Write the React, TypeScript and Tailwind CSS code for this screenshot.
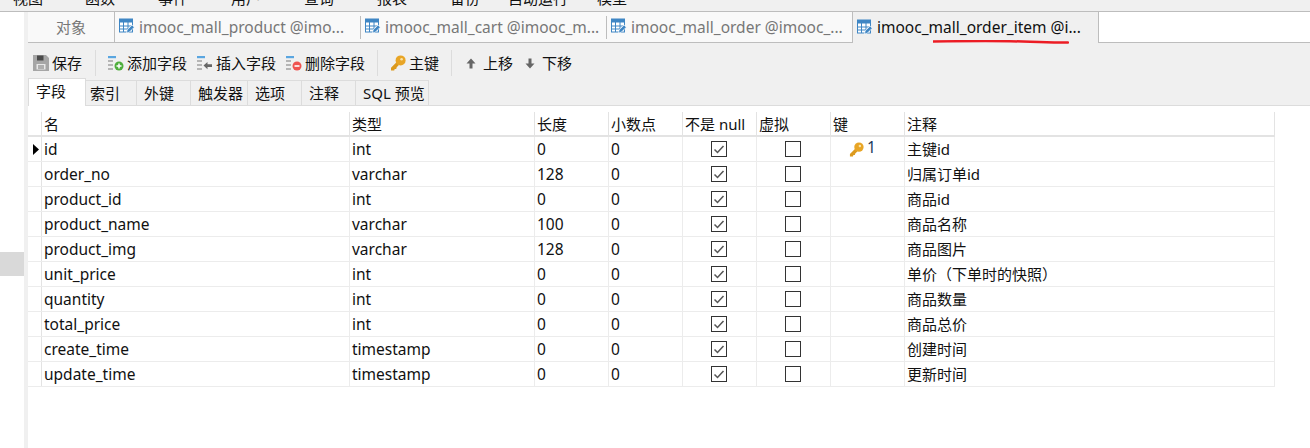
const font = { fontFamily: '"Noto Sans", "Noto Sans CJK SC", sans-serif' };

const menus = [
  { label: '视图', w: 'w-[72px]' },
  { label: '函数', w: 'w-[73px]' },
  { label: '事件', w: 'w-[73px]' },
  { label: '用户', w: 'w-[73px]' },
  { label: '查询', w: 'w-[73px]' },
  { label: '报表', w: 'w-[73px]' },
  { label: '备份', w: 'w-[58px]' },
  { label: '自动运行', w: 'w-[89px]' },
  { label: '模型', w: 'w-[40px]' },
];

const rows = [
  ['id', 'int', '0', '0', '主键id'],
  ['order_no', 'varchar', '128', '0', '归属订单id'],
  ['product_id', 'int', '0', '0', '商品id'],
  ['product_name', 'varchar', '100', '0', '商品名称'],
  ['product_img', 'varchar', '128', '0', '商品图片'],
  ['unit_price', 'int', '0', '0', '单价（下单时的快照）'],
  ['quantity', 'int', '0', '0', '商品数量'],
  ['total_price', 'int', '0', '0', '商品总价'],
  ['create_time', 'timestamp', '0', '0', '创建时间'],
  ['update_time', 'timestamp', '0', '0', '更新时间'],
];

const gridCols = 'grid grid-cols-[14px_308px_185px_74px_74px_74px_74px_74px_370px] w-[1247px]';

const TableIcon = () => (
  <svg width="16" height="16" viewBox="0 0 16 16" className="shrink-0 -mt-[2px]">
    <rect x="0.5" y="1" width="13" height="13" fill="#fff" stroke="#3f86c4" />
    <rect x="0.5" y="1" width="13" height="3.5" fill="#3f86c4" />
    <path d="M0.5 8h13M0.5 11h13M4.5 4v10M9 4v10" stroke="#3f86c4" fill="none" />
    <path d="M7.5 15l.6-3 5-5 2.2 2.2-5 5z" fill="#3f86c4" stroke="#fff" strokeWidth="0.7" />
  </svg>
);

const KeyIcon = ({ size = 15 }: { size?: number }) => (
  <svg width={size} height={size} viewBox="0 0 16 16" className="shrink-0">
    <path d="M6.8 7L1 12.8v2.7h3.2l.5-1.6h1.5l.5-1.7 2.2-2.2z" fill="#dc9a1e" />
    <circle cx="10.6" cy="5.4" r="5" fill="#e8a526" />
    <circle cx="11.6" cy="4.3" r="1.3" fill="#fbe3a6" />
  </svg>
);

const FieldLines = () => (
  <>
    <rect x="1" y="1" width="8" height="2.2" fill="#5aa6e0" />
    <rect x="1" y="5" width="5" height="2" fill="#b5b5b5" />
    <rect x="1" y="9" width="5" height="2" fill="#b5b5b5" />
    <rect x="1" y="13" width="5" height="2" fill="#b5b5b5" />
  </>
);

const AddIcon = () => (
  <svg width="17" height="16" viewBox="0 0 17 16" className="shrink-0">
    <FieldLines />
    <circle cx="12" cy="11" r="4.5" fill="#4eae3c" />
    <path d="M9.5 11h5M12 8.5v5" stroke="#fff" strokeWidth="1.5" />
  </svg>
);

const InsertIcon = () => (
  <svg width="17" height="16" viewBox="0 0 17 16" className="shrink-0">
    <FieldLines />
    <path d="M7.5 10.5l4-3.6v2.3h4.5v2.7h-4.5v2.3z" fill="#666" />
  </svg>
);

const DeleteIcon = () => (
  <svg width="17" height="16" viewBox="0 0 17 16" className="shrink-0">
    <FieldLines />
    <circle cx="12" cy="11" r="4.5" fill="#ef5350" />
    <path d="M9.5 11h5" stroke="#fff" strokeWidth="1.6" />
  </svg>
);

const SaveIcon = () => (
  <svg width="16" height="16" viewBox="0 0 16 16" className="shrink-0">
    <path d="M0 0h13l3 3v13H0z" fill="#a6a6a6" />
    <rect x="4" y="0.5" width="6.5" height="5" fill="#4a4a4a" />
    <rect x="3.5" y="9" width="9" height="5.5" fill="#e8e8e8" />
    <path d="M5 11h6M5 13h6" stroke="#777" />
  </svg>
);

const ArrowIcon = ({ down = false }: { down?: boolean }) => (
  <svg width="10" height="11" viewBox="0 0 10 11" className={down ? 'shrink-0 rotate-180' : 'shrink-0'}>
    <path d="M5 0.5L9.5 5.5H6.5V10.5H3.5V5.5H0.5z" fill="#666" />
  </svg>
);

const Check = ({ checked }: { checked: boolean }) => (
  <svg width="16" height="16" viewBox="0 0 16 16">
    <rect x="0.5" y="0.5" width="15" height="15" fill="#fff" stroke="#333" />
    {checked && <path d="M3.5 8.5l3 3 6-6.5" fill="none" stroke="#555" strokeWidth="1.5" />}
  </svg>
);

const Divider = () => <div className="w-px h-[26px] bg-[#dcdcdc]" />;

const FileTab = ({ title, className }: { title: string; className: string }) => (
  <div className={`h-full flex items-center pl-[4px] gap-[4px] text-[15.5px] ${className}`}>
    <TableIcon />
    <span className="whitespace-nowrap mt-px">{title}</span>
  </div>
);

const ToolButton = ({ icon, label, className = '' }: { icon: React.ReactNode; label: string; className?: string }) => (
  <div className={`flex items-center whitespace-nowrap ${className}`}>
    {icon}
    <span>{label}</span>
  </div>
);

const subTabs = [
  { label: '索引', w: 'w-[51px] pl-[4px]' },
  { label: '外键', w: 'w-[54px] pl-[7px]' },
  { label: '触发器', w: 'w-[57px] pl-[7px]' },
  { label: '选项', w: 'w-[54px] pl-[7px]' },
  { label: '注释', w: 'w-[54px] pl-[7px]' },
  { label: 'SQL 预览', w: 'w-[73px] pl-[7px]' },
];

const App = () => {
  return (
    <div className="relative w-[1310px] h-[448px] overflow-hidden bg-white text-[15px] text-[#111]" style={font}>
      {/* menu bar, cut off by the screenshot */}
      <div className="h-[12px] bg-[#f0f0f0] border-b border-[#bdbdbd] overflow-hidden flex pl-[13px]">
        {menus.map((m) => (
          <div key={m.label} className={`${m.w} -mt-[12px] text-[15px] leading-[20px] shrink-0`}>
            {m.label}
          </div>
        ))}
      </div>

      <div className="flex h-[436px]">
        {/* collapsed sidebar */}
        <div className="w-[24px] shrink-0 bg-white pt-[240px]">
          <div className="h-[24px] bg-[#d9d9d9]" />
        </div>
        <div className="w-[4px] shrink-0 bg-[#f0f0f0]" />

        <div className="flex-1 min-w-0">
          {/* file tabs */}
          <div className="h-[31px] flex bg-white">
            <div className="flex h-full border-b border-[#bdbdbd] bg-[#f9f9f9] text-[#777]">
              <div className="w-[87px] h-full flex items-center justify-center border-r border-[#bdbdbd]">对象</div>
              <FileTab title="imooc_mall_product @imo..." className="w-[245px]" />
              <div className="w-px h-[23px] mt-[4px] bg-[#bdbdbd]" />
              <FileTab title="imooc_mall_cart @imooc_m..." className="w-[245px]" />
              <div className="w-px h-[23px] mt-[4px] bg-[#bdbdbd]" />
              <FileTab title="imooc_mall_order @imooc_..." className="w-[246px] border-r border-[#bdbdbd]" />
            </div>
            <FileTab title="imooc_mall_order_item @i..." className="w-[246px] bg-[#f0f0f0] border-r border-[#bdbdbd] text-[#111]" />
            <div className="flex-1 border-b border-[#bdbdbd]" />
          </div>

          {/* toolbar */}
          <div className="h-[38px] bg-[#f0f0f0] flex items-center pl-[5px] pt-[2px]">
            <ToolButton icon={<SaveIcon />} label="保存" className="w-[62px] gap-[3px]" />
            <Divider />
            <ToolButton icon={<AddIcon />} label="添加字段" className="ml-[11px] w-[89px] gap-[3px]" />
            <ToolButton icon={<InsertIcon />} label="插入字段" className="w-[89px] gap-[3px]" />
            <ToolButton icon={<DeleteIcon />} label="删除字段" className="w-[92px] gap-[3px]" />
            <Divider />
            <ToolButton icon={<KeyIcon size={16} />} label="主键" className="ml-[12px] w-[61px] gap-[3px]" />
            <Divider />
            <ToolButton icon={<ArrowIcon />} label="上移" className="ml-[14px] w-[59px] gap-[7px]" />
            <ToolButton icon={<ArrowIcon down />} label="下移" className="gap-[7px]" />
          </div>

          {/* field tabs */}
          <div className="h-[25px] bg-[#f0f0f0] flex items-end border-b border-[#dcdcdc]">
            <div className="w-[58px] h-[28px] -mb-px bg-white border border-b-0 border-[#dcdcdc] flex items-center pl-[7px] pb-[2px] z-10">
              字段
            </div>
            {subTabs.map((t) => (
              <div key={t.label} className={`${t.w} h-[25px] flex items-center border-t border-r border-[#dcdcdc] whitespace-nowrap`}>
                {t.label}
              </div>
            ))}
          </div>

          {/* fields table */}
          <div className="bg-white pt-[6px]">
            <div className={`${gridCols} h-[25px] border-b-2 border-[#e3e3e3]`}>
              {['', '名', '类型', '长度', '小数点', '不是 null', '虚拟', '键', '注释'].map((h, i) => (
                <div key={i} className="border-r border-[#e3e3e3] pl-[2px] leading-[24px] whitespace-nowrap">
                  {h}
                </div>
              ))}
            </div>
            {rows.map((r, i) => (
              <div key={r[0]} className={`${gridCols} h-[25px] border-b border-[#ececec]`}>
                <div className="border-r border-[#e3e3e3] flex items-center pl-[5px]">
                  {i === 0 && (
                    <svg width="6" height="11" viewBox="0 0 6 11">
                      <path d="M0 0l6 5.5L0 11z" fill="#000" />
                    </svg>
                  )}
                </div>
                <div className="border-r border-[#ececec] pl-[2px] leading-[24px] text-[15.5px]">{r[0]}</div>
                <div className="border-r border-[#ececec] pl-[2px] leading-[24px] text-[15.5px]">{r[1]}</div>
                <div className="border-r border-[#ececec] pl-[2px] leading-[24px] text-[15.5px]">{r[2]}</div>
                <div className="border-r border-[#ececec] pl-[2px] leading-[24px] text-[15.5px]">{r[3]}</div>
                <div className="border-r border-[#ececec] flex items-center justify-center pr-[2px]">
                  <Check checked />
                </div>
                <div className="border-r border-[#ececec] flex items-center justify-center pr-[2px]">
                  <Check checked={false} />
                </div>
                <div className="border-r border-[#ececec] flex items-center pl-[18px] gap-[3px]">
                  {i === 0 && (
                    <>
                      <KeyIcon />
                      <span className="-mt-[2px] text-[15.5px] text-[#1a3a5c]">1</span>
                    </>
                  )}
                </div>
                <div className="border-r border-[#ececec] pl-[2px] leading-[24px] whitespace-nowrap">{r[4]}</div>
              </div>
            ))}
          </div>
        </div>
      </div>

      {/* hand drawn underline on the active tab */}
      <svg className="absolute left-[933px] top-[40px]" width="136" height="5" viewBox="0 0 136 5">
        <path d="M0 1.5C40 1 70 1 90 1.5s25 1 45 1" fill="none" stroke="#ec1c24" strokeWidth="2.5" strokeLinecap="round" />
      </svg>
    </div>
  );
};

export default App;
